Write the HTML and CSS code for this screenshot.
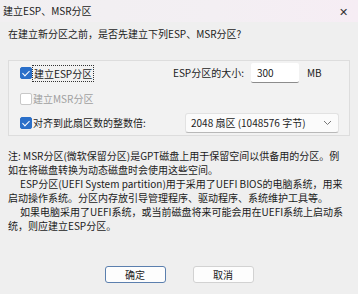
FILE: index.html
```html
<!DOCTYPE html>
<html lang="zh-CN">
<head>
    <meta charset="UTF-8">
    <title>建立ESP、MSR分区</title>
    <link rel="stylesheet" href="styles.css">
</head>
<body>
    <div class="titlebar">
        <span class="title">建立ESP、MSR分区</span>
        <span class="close">✕</span>
    </div>

    <div class="prompt">在建立新分区之前，是否先建立下列ESP、MSR分区?</div>

    <div class="group">
        <div class="row row-esp">
            <label class="check-item left">
                <span class="box checked"></span>
                <span class="focus">建立ESP分区</span>
            </label>
            <span class="size-label">ESP分区的大小:</span>
            <input class="size-input" type="text" value="300">
            <span class="unit">MB</span>
        </div>
        <div class="row row-msr">
            <label class="check-item disabled">
                <span class="box"></span>
                <span>建立MSR分区</span>
            </label>
        </div>
        <div class="row row-align">
            <label class="check-item left wide">
                <span class="box checked"></span>
                <span>对齐到此扇区数的整数倍:</span>
            </label>
            <div class="select">
                <span>2048 扇区 (1048576 字节)</span>
                <svg class="chevron" width="9" height="6" viewBox="0 0 9 6"><path d="M1 1 L4.5 4.5 L8 1" fill="none" stroke="#777" stroke-width="1"/></svg>
            </div>
        </div>
    </div>

    <div class="note">
        <p>注: MSR分区(微软保留分区)是GPT磁盘上用于保留空间以供备用的分区。例<br>如在将磁盘转换为动态磁盘时会使用这些空间。</p>
        <p><span class="indent"></span>ESP分区(UEFI System partition)用于采用了UEFI BIOS的电脑系统，用来<br>启动操作系统。分区内存放引导管理程序、驱动程序、系统维护工具等。</p>
        <p><span class="indent"></span>如果电脑采用了UEFI系统，或当前磁盘将来可能会用在UEFI系统上启动系<br>统，则应建立ESP分区。</p>
    </div>

    <div class="footer">
        <button class="btn default">确定</button>
        <button class="btn">取消</button>
    </div>
</body>
</html>
```

FILE: styles.css
```css
* {
    box-sizing: border-box;
}

body {
    margin: 0;
    width: 358px;
    height: 294px;
    display: flex;
    flex-direction: column;
    font-family: "Noto Sans CJK SC", "Noto Sans", sans-serif;
    font-size: 10px;
    line-height: 14px;
    color: #1b1b1b;
    background-color: #efefef;
    overflow: hidden;
}

.titlebar {
    height: 22px;
    display: flex;
    align-items: center;
    justify-content: space-between;
    padding: 0 10px 0 3px;
    background: linear-gradient(90deg, #f1eff1 0%, #f3eff3 60%, #f6edf4 100%);
}

.close {
    font-size: 11px;
    color: #333;
}

.prompt {
    margin-top: 5px;
    padding-left: 8px;
}

.group {
    margin: 19px 8px 0 8px;
    height: 76px;
    border: 1px solid #dddddd;
    background-color: #f2f2f2;
    padding: 2px 0 0 11px;
}

.row {
    display: flex;
    align-items: center;
}

.row-esp {
    height: 20px;
}

.row-msr {
    height: 14px;
    margin-top: 9px;
}

.row-align {
    height: 20px;
    margin-top: 7px;
}

.check-item {
    display: flex;
    align-items: center;
    gap: 1px;
}

.left {
    width: 153px;
}

.wide {
    width: 165px;
}

.box {
    width: 12px;
    height: 12px;
    border: 1px solid #8a8a8a;
    border-radius: 2px;
    background-color: #fff;
    position: relative;
}

.box.checked {
    background-color: #2a6fc9;
    border-color: #2a6fc9;
}

.box.checked::after {
    content: "";
    position: absolute;
    left: 3px;
    top: 1px;
    width: 3px;
    height: 6px;
    border: solid #fff;
    border-width: 0 1.5px 1.5px 0;
    transform: rotate(45deg);
}

.disabled {
    color: #a0a0a0;
}

.disabled .box {
    border-color: #c8c8c8;
}

.focus {
    outline: 1px dotted #333;
    padding: 1px 1px 0 1px;
}

.size-label {
    width: 78px;
}

.size-input {
    width: 48px;
    height: 20px;
    border: none;
    border-bottom: 1px solid #8c8c8c;
    background-color: #fff;
    font: inherit;
    color: inherit;
    padding: 0 6px;
    border-radius: 2px;
}

.unit {
    margin-left: 8px;
}

.select {
    width: 154px;
    height: 20px;
    display: flex;
    align-items: center;
    justify-content: space-between;
    padding: 0 6px 0 5px;
    background-color: #fbfbfb;
    border: 1px solid #e2e2e2;
    border-bottom-color: #b8b8b8;
    border-radius: 3px;
}

.note {
    margin-top: 13px;
    padding-left: 8px;
}

.note p {
    margin: 0;
    white-space: nowrap;
}

.indent {
    display: inline-block;
    width: 12px;
}

.footer {
    margin-top: auto;
    padding-bottom: 11px;
    display: flex;
    justify-content: center;
    gap: 27px;
}

.btn {
    width: 61px;
    height: 17px;
    font: inherit;
    color: inherit;
    background-color: #fdfdfd;
    border: 1px solid #d2d2d2;
    border-radius: 3px;
    padding: 0;
}

.btn.default {
    border-color: #5b7fae;
}
```
